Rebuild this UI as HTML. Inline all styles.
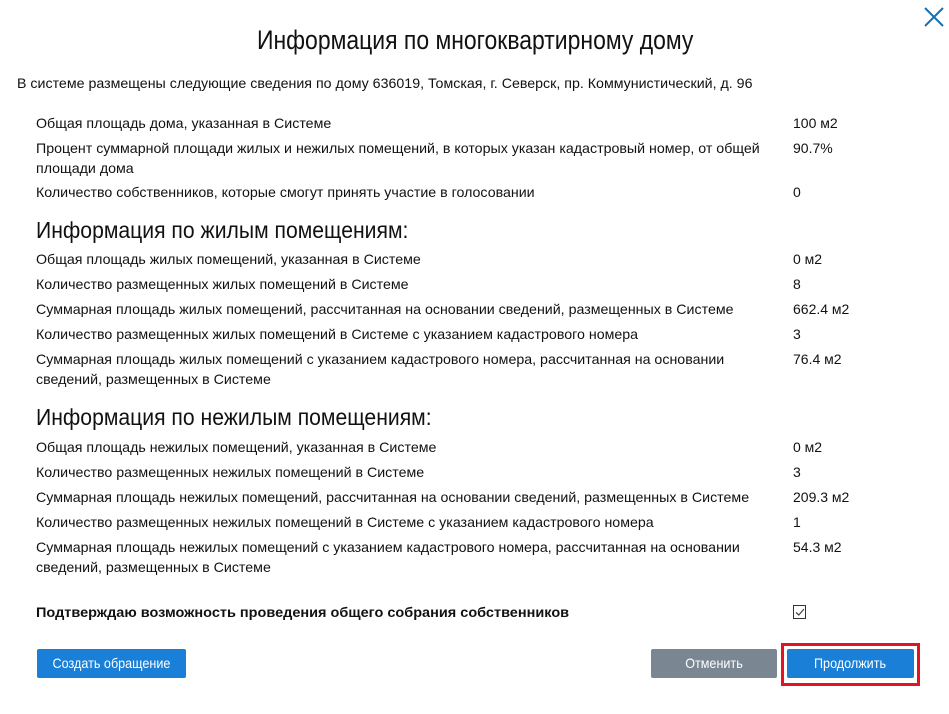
<!DOCTYPE html>
<html><head><meta charset="utf-8"><style>
*{margin:0;padding:0;box-sizing:border-box}
body{width:949px;height:714px;background:#fff;font-family:"Liberation Sans",sans-serif;color:#111;position:relative;overflow:hidden}
.a{position:absolute;white-space:nowrap}
.t{font-size:14px;line-height:20px}
.sx{display:inline-block;transform-origin:0 0}
.t .sx{transform:scaleX(1.015)}
.btn{position:absolute;top:649px;height:29px;border-radius:2px;color:#fff;font-size:14px;line-height:29px;text-align:center}
</style></head><body>
<svg class="a" style="left:922px;top:5px" width="24" height="24" viewBox="0 0 24 24"><path d="M3 3L21 21M21 3L3 21" stroke="#1a6fb0" stroke-width="2" fill="none"/></svg>
<div class="a" style="left:257px;top:24px;font-size:27px;line-height:32px"><span class="sx" style="transform:scaleX(0.85)">Информация по многоквартирному дому</span></div>
<div class="a t" style="left:17px;top:73px"><span class="sx">В системе размещены следующие сведения по дому 636019, Томская, г. Северск, пр. Коммунистический, д. 96</span></div>

<div class="a t" style="left:36px;top:113px"><span class="sx">Общая площадь дома, указанная в Системе</span></div>
<div class="a t" style="left:793px;top:113px">100 м2</div>
<div class="a t" style="left:36px;top:138px"><span class="sx">Процент суммарной площади жилых и нежилых помещений, в которых указан кадастровый номер, от общей<br>площади дома</span></div>
<div class="a t" style="left:793px;top:138px">90.7%</div>
<div class="a t" style="left:36px;top:182px"><span class="sx">Количество собственников, которые смогут принять участие в голосовании</span></div>
<div class="a t" style="left:793px;top:182px">0</div>

<div class="a" style="left:36px;top:216px;font-size:23px;line-height:28px"><span class="sx" style="transform:scaleX(0.92)">Информация по жилым помещениям:</span></div>
<div class="a t" style="left:36px;top:249px"><span class="sx">Общая площадь жилых помещений, указанная в Системе</span></div>
<div class="a t" style="left:793px;top:249px">0 м2</div>
<div class="a t" style="left:36px;top:274px"><span class="sx">Количество размещенных жилых помещений в Системе</span></div>
<div class="a t" style="left:793px;top:274px">8</div>
<div class="a t" style="left:36px;top:299px"><span class="sx">Суммарная площадь жилых помещений, рассчитанная на основании сведений, размещенных в Системе</span></div>
<div class="a t" style="left:793px;top:299px">662.4 м2</div>
<div class="a t" style="left:36px;top:324px"><span class="sx">Количество размещенных жилых помещений в Системе с указанием кадастрового номера</span></div>
<div class="a t" style="left:793px;top:324px">3</div>
<div class="a t" style="left:36px;top:349px"><span class="sx">Суммарная площадь жилых помещений с указанием кадастрового номера, рассчитанная на основании<br>сведений, размещенных в Системе</span></div>
<div class="a t" style="left:793px;top:349px">76.4 м2</div>

<div class="a" style="left:36px;top:403px;font-size:23px;line-height:28px"><span class="sx" style="transform:scaleX(0.92)">Информация по нежилым помещениям:</span></div>
<div class="a t" style="left:36px;top:437px"><span class="sx">Общая площадь нежилых помещений, указанная в Системе</span></div>
<div class="a t" style="left:793px;top:437px">0 м2</div>
<div class="a t" style="left:36px;top:462px"><span class="sx">Количество размещенных нежилых помещений в Системе</span></div>
<div class="a t" style="left:793px;top:462px">3</div>
<div class="a t" style="left:36px;top:487px"><span class="sx">Суммарная площадь нежилых помещений, рассчитанная на основании сведений, размещенных в Системе</span></div>
<div class="a t" style="left:793px;top:487px">209.3 м2</div>
<div class="a t" style="left:36px;top:512px"><span class="sx">Количество размещенных нежилых помещений в Системе с указанием кадастрового номера</span></div>
<div class="a t" style="left:793px;top:512px">1</div>
<div class="a t" style="left:36px;top:537px"><span class="sx">Суммарная площадь нежилых помещений с указанием кадастрового номера, рассчитанная на основании<br>сведений, размещенных в Системе</span></div>
<div class="a t" style="left:793px;top:537px">54.3 м2</div>

<div class="a t" style="left:36px;top:602px;font-weight:bold"><span class="sx" style="transform:scaleX(1.035)">Подтверждаю возможность проведения общего собрания собственников</span></div>
<div class="a" style="left:793px;top:605px;width:13px;height:14px;border:1px solid #333"></div>
<svg class="a" style="left:795px;top:607px" width="10" height="10" viewBox="0 0 10 10"><path d="M1 5.5L3.8 8L9 2" stroke="#444" stroke-width="1.2" fill="none"/></svg>

<div class="btn" style="left:37px;width:149px;background:#1a7fd6"><span class="sx" style="transform:scaleX(0.9);transform-origin:50% 0">Создать обращение</span></div>
<div class="btn" style="left:651px;width:126px;background:#7a8793"><span class="sx" style="transform:scaleX(0.9);transform-origin:50% 0">Отменить</span></div>
<div class="a" style="left:781px;top:643px;width:139px;height:43px;border:3px solid #e3141f"></div>
<div class="btn" style="left:787px;width:127px;background:#1a7fd6"><span class="sx" style="transform:scaleX(0.9);transform-origin:50% 0">Продолжить</span></div>
</body></html>
